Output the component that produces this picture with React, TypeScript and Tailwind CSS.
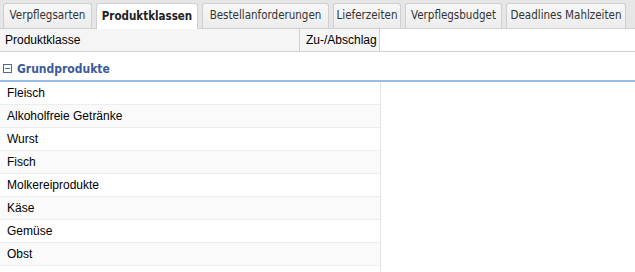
import React from "react";

const tabs = [
  { label: "Verpflegsarten", w: "w-[89px]" },
  { label: "Produktklassen", w: "w-[102px]", active: true },
  { label: "Bestellanforderungen", w: "w-[127px]" },
  { label: "Lieferzeiten", w: "w-[68px]" },
  { label: "Verpflegsbudget", w: "w-[97px]" },
  { label: "Deadlines Mahlzeiten", w: "w-[120px]" },
];

const rows = [
  "Fleisch",
  "Alkoholfreie Getränke",
  "Wurst",
  "Fisch",
  "Molkereiprodukte",
  "Käse",
  "Gemüse",
  "Obst",
  "",
];

const App = () => {
  return (
    <div className="h-[272px] w-[635px] overflow-hidden bg-white font-['Liberation_Sans',Arial,sans-serif] text-[12px] text-black">
      {/* tab strip */}
      <div className="flex h-[29px] items-end gap-[4px] border-b border-[#d0d0d0] bg-[#e6e6e6] pl-[3px]">
        {tabs.map((t) => (
          <div
            key={t.label}
            className={`${t.w} flex h-[25px] items-center justify-center rounded-t-[3px] border border-b-0 border-[#cfcfcf] font-['DejaVu_Sans_Condensed','DejaVu_Sans',sans-serif] ${
              t.active
                ? "-mb-px h-[26px] bg-white text-[11.5px] font-bold text-[#222]"
                : "bg-gradient-to-b from-[#f7f7f7] to-[#ececec] text-[11.5px] text-[#333]"
            }`}
          >
            {t.label}
          </div>
        ))}
      </div>

      {/* column header */}
      <div className="flex h-[23px] border-b border-[#d0d0d0]">
        <div className="flex w-[300px] items-center border-r border-[#d0d0d0] bg-[#f5f5f5] pl-[5px]">
          Produktklasse
        </div>
        <div className="flex w-[80px] items-center border-r border-[#d0d0d0] bg-[#f5f5f5] pl-[6px]">
          Zu-/Abschlag
        </div>
      </div>

      {/* group header */}
      <div className="mt-[5px] flex h-[25px] items-center gap-[5px] border-b-2 border-[#99bbe8] pl-[3px] font-['DejaVu_Sans_Condensed','DejaVu_Sans',sans-serif] text-[12px] font-bold text-[#3b5a99]">
        <span className="flex h-[9px] w-[9px] items-center justify-center border border-[#4b6a9f]">
          <span className="h-px w-[5px] bg-[#4b6a9f]" />
        </span>
        Grundprodukte
      </div>

      {/* rows */}
      <div className="w-[381px] border-r border-[#e3e3e3]">
        {rows.map((r, i) => (
          <div
            key={i}
            className={`flex h-[23px] items-center border-b border-[#ededed] pl-[7px] ${
              i % 2 === 1 ? "bg-[#fafafa]" : "bg-white"
            }`}
          >
            {r}
          </div>
        ))}
      </div>
    </div>
  );
};

export default App;
